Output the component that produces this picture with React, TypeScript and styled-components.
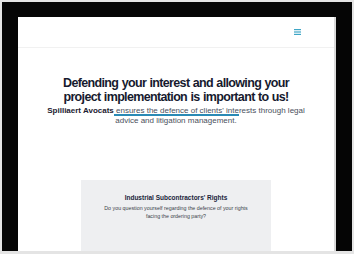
import React from "react"
import styled, { createGlobalStyle } from "styled-components"

const GlobalStyle = createGlobalStyle`
  html, body {
    margin: 0;
    padding: 0;
    background: #e4e4e4;
  }
`

const Shell = styled.div`
  width: 354px;
  height: 254px;
  box-sizing: border-box;
  padding: 2px 2px 3px 2px;
  background: #e4e4e4;
  overflow: hidden;
`

const Frame = styled.div`
  height: 100%;
  box-sizing: border-box;
  background: #050505;
  padding: 15px 16px 0 16px;
`

const Page = styled.div`
  height: 100%;
  background: #ffffff;
  border-right: 2px solid #d9d9d9;
  overflow: hidden;
  display: flex;
  flex-direction: column;
`

const Header = styled.div`
  height: 30px;
  flex: none;
  border-bottom: 1px solid #f1f1f1;
  display: flex;
  align-items: center;
  justify-content: flex-end;
  padding-right: 33px;
`

const Hero = styled.div`
  display: flex;
  flex-direction: column;
  align-items: center;
  padding-top: 28px;
  font-family: "Liberation Sans", Arial, sans-serif;
`

const Title = styled.h1`
  margin: 0;
  font-family: "Liberation Sans", Arial, sans-serif;
  font-weight: 700;
  font-size: 12.5px;
  line-height: 14px;
  letter-spacing: -0.65px;
  word-spacing: 0.5px;
  color: #161a2e;
  text-align: center;
  width: 250px;
`

const Lead = styled.p`
  position: relative;
  margin: 2px 0 0;
  font-size: 8px;
  line-height: 10px;
  color: #4a505c;
  text-align: center;
  width: 260px;
  b {
    color: #1c2030;
  }
`

const Stroke = styled.span`
  position: absolute;
  left: 68px;
  top: 8px;
  width: 125px;
  height: 2px;
  background: #2a8ab5;
`

const Card = styled.div`
  margin: 54px auto 0;
  width: 190px;
  flex: 1;
  background: #eeeff1;
  display: flex;
  flex-direction: column;
  align-items: center;
  padding-top: 13px;
  font-family: "Liberation Sans", Arial, sans-serif;
`

const CardTitle = styled.div`
  font-weight: 700;
  font-size: 6.5px;
  line-height: 9px;
  color: #20243a;
`

const CardText = styled.div`
  margin-top: 2px;
  font-size: 5.3px;
  line-height: 8px;
  color: #3a3f4a;
  text-align: center;
  width: 156px;
`

const Burger = () => (
  <svg width="7" height="6" viewBox="0 0 7 6">
    <g fill="#3fa6c6">
      <rect x="0" y="0" width="7" height="1.2" />
      <rect x="0" y="2.4" width="7" height="1.2" />
      <rect x="0" y="4.8" width="7" height="1.2" />
    </g>
  </svg>
)

export default function App() {
  return (
    <Shell>
      <GlobalStyle />
      <Frame>
        <Page>
          <Header>
            <Burger />
          </Header>
          <Hero>
            <Title>
              Defending your interest and allowing your project implementation
              is important to us!
            </Title>
            <Lead>
              <b>Spilliaert Avocats</b> ensures the defence of clients' interests
              through legal advice and litigation management.
              <Stroke />
            </Lead>
          </Hero>
          <Card>
            <CardTitle>Industrial Subcontractors' Rights</CardTitle>
            <CardText>
              Do you question yourself regarding the defence of your rights
              facing the ordering party?
            </CardText>
          </Card>
        </Page>
      </Frame>
    </Shell>
  )
}
